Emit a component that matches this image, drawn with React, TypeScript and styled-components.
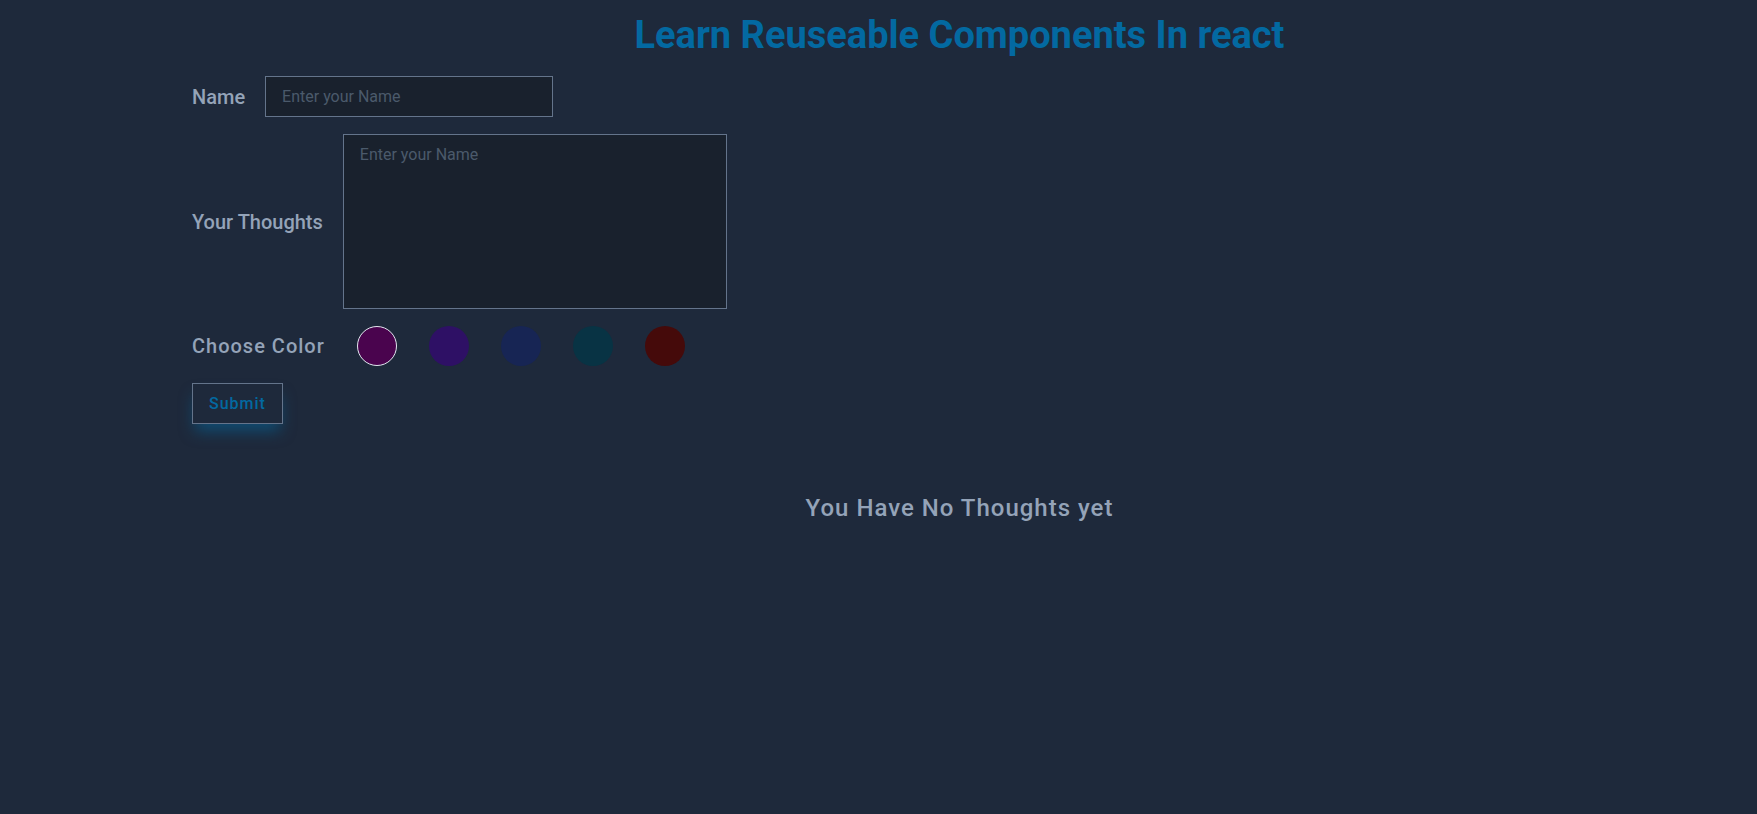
import React, { useState } from "react";
import styled, { createGlobalStyle } from "styled-components";

const GlobalStyle = createGlobalStyle`
  html, body {
    margin: 0;
    padding: 0;
    background: #1e293b;
    font-family: Roboto, "Liberation Sans", Arial, sans-serif;
  }
  * { box-sizing: border-box; }
`;

const Page = styled.main`
  min-height: 100vh;
  padding: 13px 30px 40px 192px;
`;

const Title = styled.h1`
  margin: 0;
  text-align: center;
  font-size: 38px;
  font-weight: 700;
  line-height: normal;
  color: #0369a1;
`;

const Form = styled.form`
  display: flex;
  flex-direction: column;
  align-items: flex-start;
  gap: 17px;
  margin-top: 19px;
`;

const FieldRow = styled.div<{ $gap?: number }>`
  display: flex;
  align-items: center;
  gap: ${(p) => p.$gap ?? 20}px;
`;

const Label = styled.label<{ $spaced?: boolean }>`
  font-size: 20px;
  font-weight: 500;
  line-height: normal;
  color: #94a3b8;
  letter-spacing: ${(p) => (p.$spaced ? "1px" : "normal")};
`;

const fieldStyles = `
  font-family: Roboto, "Liberation Sans", Arial, sans-serif;
  font-size: 16px;
  line-height: normal;
  padding: 10px 16px;
  background: #19212d;
  color: #cbd5e1;
  border: 1px solid #64748b;
  border-radius: 0;
  outline: none;
  &::placeholder { color: #4b5a6b; opacity: 1; }
`;

const TextInput = styled.input`
  ${fieldStyles}
  width: 288px;
`;

const TextArea = styled.textarea`
  ${fieldStyles}
  width: 384px;
  height: 175px;
  resize: none;
  display: block;
`;

const Swatch = styled.button<{ $color: string; $selected: boolean }>`
  width: 40px;
  height: 40px;
  padding: 0;
  border-radius: 50%;
  background: ${(p) => p.$color};
  border: 1px solid ${(p) => (p.$selected ? "#e2e8f0" : "transparent")};
  cursor: pointer;
`;

const SubmitButton = styled.button`
  font-family: Roboto, "Liberation Sans", Arial, sans-serif;
  font-size: 16px;
  font-weight: 500;
  line-height: normal;
  letter-spacing: 1px;
  padding: 10px 16px;
  color: #0369a1;
  background: transparent;
  border: 1px solid #64748b;
  border-radius: 0;
  box-shadow: 0 10px 15px -3px rgba(3, 105, 161, 0.55);
  cursor: pointer;
`;

const Empty = styled.p`
  margin: 70px 0 0;
  text-align: center;
  font-size: 24px;
  font-weight: 500;
  line-height: normal;
  letter-spacing: 1px;
  color: #94a3b8;
`;

const ThoughtList = styled.ul`
  list-style: none;
  margin: 70px 0 0;
  padding: 0;
  display: flex;
  flex-wrap: wrap;
  gap: 16px;
`;

const ThoughtCard = styled.li<{ $color: string }>`
  background: ${(p) => p.$color};
  color: #e2e8f0;
  padding: 12px 16px;
  min-width: 200px;
  border: 1px solid #64748b;
`;

const COLORS = ["#4a044e", "#2e1065", "#172554", "#083344", "#450a0a"];

type Thought = { name: string; text: string; color: string };

export default function App() {
  const [selected, setSelected] = useState(0);
  const [name, setName] = useState("");
  const [text, setText] = useState("");
  const [thoughts, setThoughts] = useState<Thought[]>([]);

  const onSubmit = (e: React.FormEvent) => {
    e.preventDefault();
    if (!name.trim() || !text.trim()) return;
    setThoughts((t) => [...t, { name, text, color: COLORS[selected] }]);
    setName("");
    setText("");
  };

  return (
    <>
      <GlobalStyle />
      <Page>
        <Title>Learn Reuseable Components In react</Title>
        <Form onSubmit={onSubmit}>
          <FieldRow>
            <Label htmlFor="name">Name</Label>
            <TextInput
              id="name"
              placeholder="Enter your Name"
              value={name}
              onChange={(e) => setName(e.target.value)}
            />
          </FieldRow>
          <FieldRow>
            <Label htmlFor="thoughts">Your Thoughts</Label>
            <TextArea
              id="thoughts"
              placeholder="Enter your Name"
              value={text}
              onChange={(e) => setText(e.target.value)}
            />
          </FieldRow>
          <FieldRow $gap={32}>
            <Label $spaced>Choose Color</Label>
            {COLORS.map((c, i) => (
              <Swatch
                key={c}
                type="button"
                aria-label={`color ${i + 1}`}
                $color={c}
                $selected={i === selected}
                onClick={() => setSelected(i)}
              />
            ))}
          </FieldRow>
          <SubmitButton type="submit">Submit</SubmitButton>
        </Form>
        {thoughts.length === 0 ? (
          <Empty>You Have No Thoughts yet</Empty>
        ) : (
          <ThoughtList>
            {thoughts.map((t, i) => (
              <ThoughtCard key={i} $color={t.color}>
                <strong>{t.name}</strong>
                <div>{t.text}</div>
              </ThoughtCard>
            ))}
          </ThoughtList>
        )}
      </Page>
    </>
  );
}
